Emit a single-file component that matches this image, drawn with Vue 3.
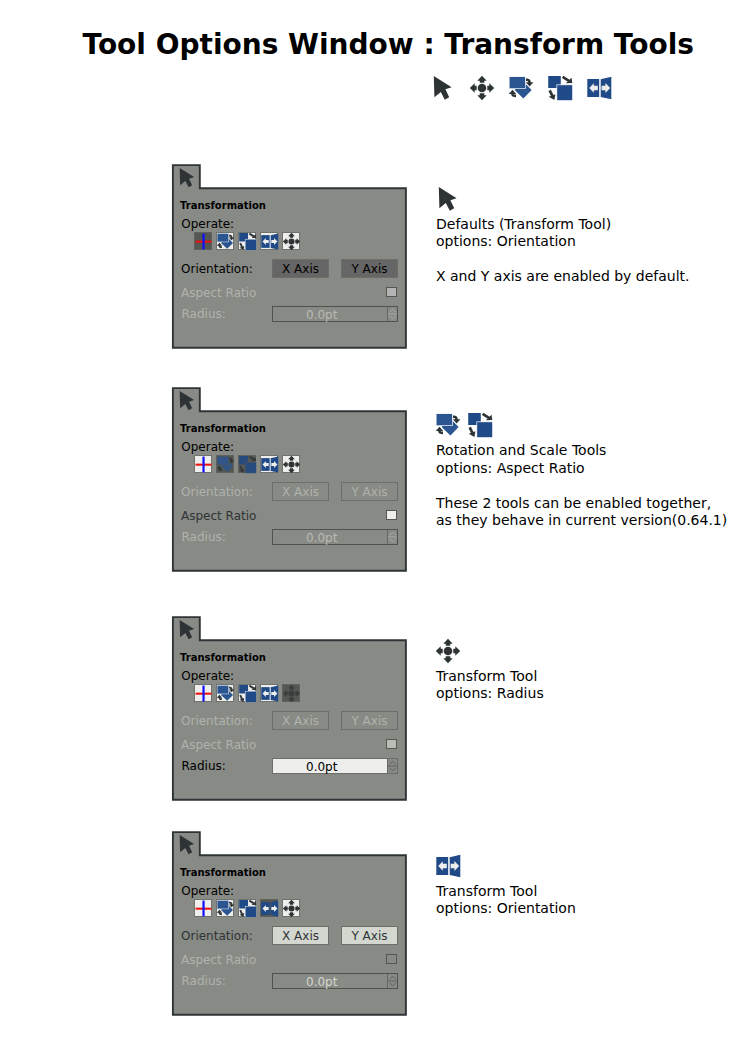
<script setup>
import { h } from 'vue'

const DARK = '#2e3436'
const BLUE = '#204a87'
const p = (d, fill, extra = {}) => h('path', { d, fill, ...extra })
const line = (d, w = 2) => h('path', { d, fill: 'none', stroke: DARK, 'stroke-width': w })

const shapes = {
  cross: () => [
    p('M.8 10.8H23.2V13.7H.8Z', '#ee1010'),
    p('M10.5 .8H13.6V23.2H10.5Z', '#1010ff'),
  ],
  pointer: () => [p('M.8 0 18.6 11.2 12.4 13.2 16.2 21.2 11.8 23.7 7.8 16 1.4 21.2Z', DARK)],
  move: () => [
    h('circle', { cx: 12, cy: 12, r: 4.3, fill: DARK }),
    p('M12 -.2 16.7 4.7H14.3V6.7H9.7V4.7H7.3Z', DARK),
    p('M12 24.2 16.7 19.3H14.3V17.3H9.7V19.3H7.3Z', DARK),
    p('M-.2 12 4.7 7.3V9.7H6.7V14.3H4.7V16.7Z', DARK),
    p('M24.2 12 19.3 7.3V9.7H17.3V14.3H19.3V16.7Z', DARK),
  ],
  rotate: () => [
    p('M14.2 5.6 22.6 14 14.4 22.4 5.6 14Z', '#2b5590'),
    p('M0 .5H16.8V13H0Z', '#dfe5ee', { class: 'halo' }),
    p('M.6 1H16V12.2H.6Z', '#2b5590'),
    line('M17 3.8H18.4Q20.6 4 20.6 7', 2.6),
    p('M16.8 6.2H24.4L20.6 10.4Z', DARK),
    line('M3.5 16.8V18.4Q3.7 19.9 7 19.9', 2.6),
    p('M-.3 18H7.2L3.5 13.8Z', DARK),
  ],
  scale: () => [
    p('M.2 0H12.8V12H.2Z', BLUE),
    p('M8.4 8.4H24.2V24.2H8.4Z', '#e4e8ee', { class: 'halo' }),
    p('M9.2 9.2H24.2V24.2H9.2Z', BLUE),
    line('M14.6 .9 21 4.8', 2.7),
    p('M23.6 1.8 24.3 7 17.8 7.2Z', DARK),
    line('M1.7 14.3 4.5 20.2', 2.7),
    p('M7.4 18.2 6.4 24 .8 20.8Z', DARK),
  ],
  flip: () => [
    p('M.3 3H12.2V21H.3Z', BLUE),
    p('M13.7 3.2 24.3.7V23.3L13.7 21Z', BLUE),
    p('M2.2 12 6.8 7.2V9.8H10.8V14.2H6.8V16.8Z', '#eeeeec'),
    p('M23.2 12 18.4 7V9.8H14.6V14.2H18.4V17Z', '#eeeeec'),
  ],
}

const Icon = (props) => h('svg', { viewBox: '0 0 24 24' }, shapes[props.name]())
Icon.props = ['name']

const toolbar = ['pointer', 'move', 'rotate', 'scale', 'flip']
const operations = ['cross', 'rotate', 'scale', 'flip', 'move']

const sections = [
  {
    id: 's1', active: ['cross'], orientation: 'pressed', aspect: 'grey', radius: 'off',
    icons: ['pointer'],
    lines: ['Defaults (Transform Tool)', 'options: Orientation', '', 'X and Y axis are enabled by default.'],
  },
  {
    id: 's2', active: ['rotate', 'scale'], orientation: 'off', aspect: 'on', radius: 'off',
    icons: ['rotate', 'scale'],
    lines: ['Rotation and Scale Tools', 'options: Aspect Ratio', '', 'These 2 tools can be enabled together,', 'as they behave in current version(0.64.1)'],
  },
  {
    id: 's3', active: ['move'], orientation: 'off', aspect: 'pale', radius: 'on',
    icons: ['move'],
    lines: ['Transform Tool', 'options: Radius'],
  },
  {
    id: 's4', active: ['flip'], orientation: 'on', aspect: 'empty', radius: 'light',
    icons: ['flip'],
    lines: ['Transform Tool', 'options: Orientation'],
  },
]
</script>

<template>
  <main class="page">
    <h1>Tool Options Window : Transform Tools</h1>
    <div class="toolbar">
      <Icon v-for="t in toolbar" :key="t" :name="t" class="icon" />
    </div>

    <section v-for="s in sections" :key="s.id" class="section" :class="s.id">
      <div class="panel">
        <svg class="frame" viewBox="0 0 237 187">
          <path d="M1.9 1.1H28.8V24.2H234.9V183.7H1.9Z" />
        </svg>
        <div class="tab"><Icon name="pointer" class="tab-icon" /></div>
        <div class="heading">Transformation</div>
        <div class="operate">Operate:</div>
        <div class="ops">
          <span v-for="o in operations" :key="o" class="op" :class="{ active: s.active.includes(o) }">
            <Icon :name="o" class="op-icon" :class="o" />
          </span>
        </div>
        <div class="row orientation" :class="s.orientation">
          <span class="label">Orientation:</span>
          <span class="axis">X Axis</span>
          <span class="axis">Y Axis</span>
        </div>
        <div class="row aspect" :class="s.aspect">
          <span class="label">Aspect Ratio</span>
          <span class="check"></span>
        </div>
        <div class="row radius" :class="s.radius">
          <span class="label">Radius:</span>
          <span class="field">
            <span class="value">0.0pt</span>
            <svg class="spin" viewBox="0 0 9 14">
              <path d="M1.7 5.2 4.7 2.2 7.7 5.2M1.7 8.9 4.7 11.9 7.7 8.9" />
              <path d="M0 7H9" />
            </svg>
          </span>
        </div>
      </div>
      <div class="note">
        <div class="note-icons">
          <Icon v-for="i in s.icons" :key="i" :name="i" class="icon" />
        </div>
        <div class="note-text">
          <div v-for="(l, n) in s.lines" :key="n" class="line">{{ l }}</div>
        </div>
      </div>
    </section>
  </main>
</template>

<style>
body { margin: 0; background: #fff; }
</style>

<style scoped>
.page {
  position: relative;
  z-index: 0;
  box-sizing: border-box;
  width: 744px;
  height: 1052px;
  overflow: hidden;
  padding-top: 28px;
  background: #fff;
  color: #000;
  font-family: "DejaVu Sans", sans-serif;
}
h1 {
  margin: 0 0 0 82.5px;
  font-size: 28px;
  line-height: 33px;
  font-weight: bold;
  white-space: nowrap;
}
.icon { display: block; width: 24px; height: 24px; flex: none; overflow: visible; }
.toolbar {
  display: flex;
  gap: 15px;
  margin: 15px 0 64px 433px;
  width: 190px;
}
.toolbar .icon:first-child { margin-right: -2px; }
.section {
  display: flex;
  height: 187px;
  margin-left: 171px;
}
.s1 { margin-top: 0; }
.s2 { margin-top: 36px; }
.s3 { margin-top: 42px; }
.s4 { margin-top: 28px; }
.panel {
  position: relative;
  width: 237px;
  height: 187px;
  flex: none;
  font-size: 12px;
  line-height: 14px;
}
.frame { position: absolute; inset: 0; width: 237px; height: 187px; z-index: -1; }
.frame path { fill: #888a85; stroke: #2e3436; stroke-width: 1.9; }
.tab { height: 36px; padding: 4.4px 0 0 7.8px; box-sizing: border-box; }
.tab-icon { display: block; width: 19.5px; height: 19.5px; }
.heading { padding-left: 9px; font-size: 10px; line-height: 12px; font-weight: bold; }
.operate { margin-top: 5px; padding-left: 10.3px; }
.ops { display: flex; gap: 4px; margin: 1px 0 0 23px; height: 18px; }
.op {
  box-sizing: border-box;
  width: 18px;
  height: 18px;
  border: 1px solid #70726e;
  background: #eeeeec;
}
.op.active { background: #555753; border-color: #5f615d; }
.op-icon { display: block; width: 17px; height: 17px; margin: -.5px; overflow: visible; }
.op.active .rotate, .op.active .scale { opacity: .85; }
.op.active .move { opacity: .7; }
.op.active :deep(.halo) { fill: #555753; }
.row { display: flex; color: #b0b2ad; }
.orientation { height: 19px; margin-top: 9px; line-height: 21px; }
.label { box-sizing: border-box; width: 101px; padding-left: 10px; flex: none; }
.axis {
  box-sizing: border-box;
  width: 57px;
  height: 19px;
  margin-right: 12px;
  border: 1px solid #6c6e6a;
  line-height: 18px;
  text-align: center;
  flex: none;
}
.orientation.pressed { color: #000; }
.pressed .axis { background: #666; }
.orientation.on { color: #2e3436; }
.on .axis { background: #d3d7cf; }
.aspect { height: 14px; margin-top: 8px; }
.aspect.on { color: #2e3436; }
.check {
  box-sizing: border-box;
  width: 11px;
  height: 10px;
  margin: 1px 0 0 114px;
  border: 1px solid #555753;
}
.grey .check { background: #b4b4b4; }
.on .check { background: #eeeeec; }
.pale .check { background: #babdb6; }
.radius { height: 16px; margin-top: 6px; }
.radius .label { padding-top: 1px; padding-left: 10.5px; }
.field {
  box-sizing: border-box;
  display: flex;
  justify-content: space-between;
  width: 126px;
  height: 16px;
  border: 1px solid #50524f;
  color: #b8bab5;
}
.value { padding-left: 33px; line-height: 14px; padding-top: 1px; }
.spin { width: 9px; height: 14px; border-left: 1px solid #666864; background: #888a85; }
.spin path { fill: none; stroke: #a8aaa5; stroke-width: 1; }
.radius.on { color: #000; }
.radius.on .field { background: #eeeeec; color: #000; border-color: #6c6e6a; }
.radius.light .field { color: #d3d7cf; }
.radius.on .spin path, .radius.light .spin path { stroke: #60625e; }
.note { margin-left: 28px; padding-top: 23px; font-size: 14px; line-height: 17.5px; white-space: nowrap; }
.note-icons { display: flex; gap: 8px; }
.note-text { margin-top: 4.5px; }
.line { height: 17.5px; }
.s1 .note-icons { margin-left: 2px; }
.s2 .note { padding-top: 26px; }
.s2 .note-text { margin-top: 5.1px; }
</style>
